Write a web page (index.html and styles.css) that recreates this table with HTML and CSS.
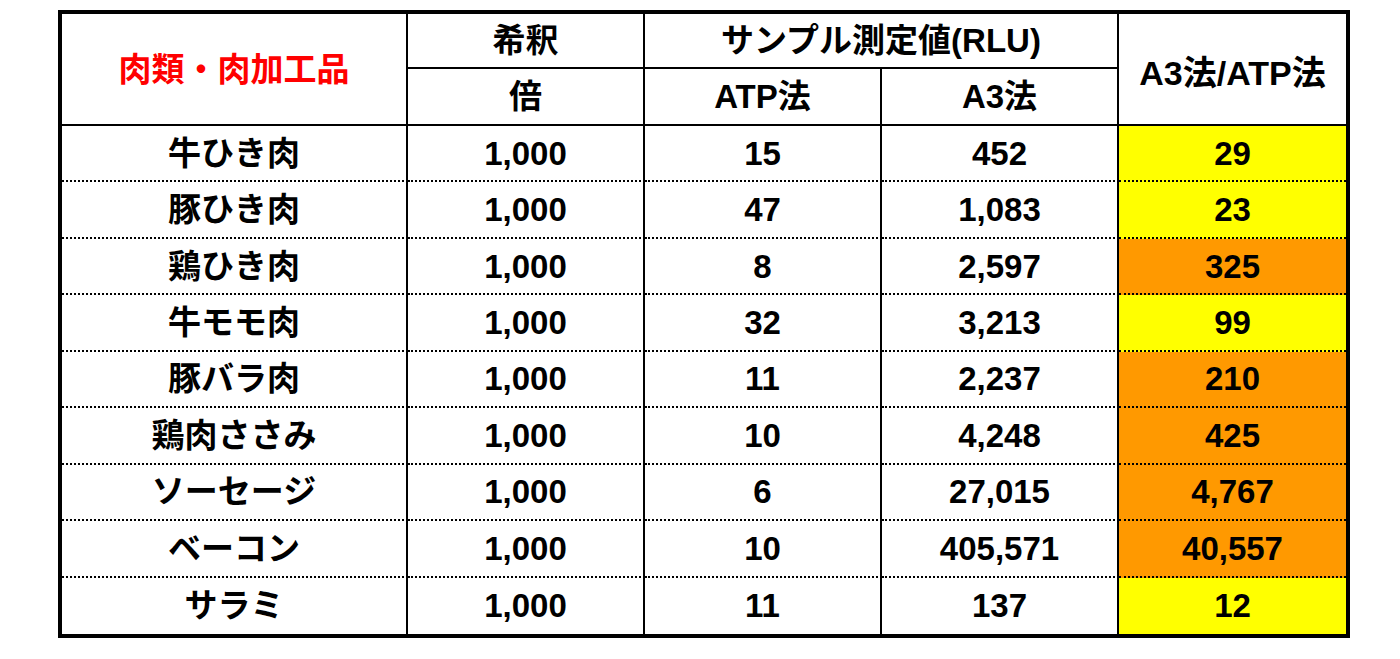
FILE: index.html
```html
<!DOCTYPE html>
<html lang="ja">
<head>
<meta charset="utf-8">
<title>肉類・肉加工品</title>
<link rel="stylesheet" href="styles.css">
</head>
<body>
<div class="sheet">
  <div class="cell head span-rows title">肉類・肉加工品</div>
  <div class="cell head">希釈</div>
  <div class="cell head span-cols">サンプル測定値(RLU)</div>
  <div class="cell head span-rows last ratio">A3法/ATP法</div>
  <div class="cell head">倍</div>
  <div class="cell head">ATP法</div>
  <div class="cell head">A3法</div>

  <div class="cell">牛ひき肉</div><div class="cell">1,000</div><div class="cell">15</div><div class="cell">452</div><div class="cell last yellow">29</div>
  <div class="cell">豚ひき肉</div><div class="cell">1,000</div><div class="cell">47</div><div class="cell">1,083</div><div class="cell last yellow">23</div>
  <div class="cell">鶏ひき肉</div><div class="cell">1,000</div><div class="cell">8</div><div class="cell">2,597</div><div class="cell last orange">325</div>
  <div class="cell">牛モモ肉</div><div class="cell">1,000</div><div class="cell">32</div><div class="cell">3,213</div><div class="cell last yellow">99</div>
  <div class="cell">豚バラ肉</div><div class="cell">1,000</div><div class="cell">11</div><div class="cell">2,237</div><div class="cell last orange">210</div>
  <div class="cell">鶏肉ささみ</div><div class="cell">1,000</div><div class="cell">10</div><div class="cell">4,248</div><div class="cell last orange">425</div>
  <div class="cell">ソーセージ</div><div class="cell">1,000</div><div class="cell">6</div><div class="cell">27,015</div><div class="cell last orange">4,767</div>
  <div class="cell">ベーコン</div><div class="cell">1,000</div><div class="cell">10</div><div class="cell">405,571</div><div class="cell last orange">40,557</div>
  <div class="cell bottom">サラミ</div><div class="cell bottom">1,000</div><div class="cell bottom">11</div><div class="cell bottom">137</div><div class="cell bottom last yellow">12</div>
</div>
</body>
</html>
```
FILE: styles.css
```css
html, body {
  margin: 0;
  padding: 0;
  background: #ffffff;
}

body {
  font-family: "Liberation Sans", Arial, "Noto Sans CJK JP", sans-serif;
  font-weight: bold;
  color: #000000;
}

.sheet {
  display: grid;
  grid-template-columns: 346px 237px 237px 237px 227px;
  grid-template-rows: 55px 57px repeat(9, 56.45px);
  width: 1284px;
  margin: 10px 0 0 58px;
  border: 4px solid #000000;
}

.cell {
  box-sizing: border-box;
  display: flex;
  align-items: center;
  justify-content: center;
  font-size: 33px;
  line-height: 1;
  border-right: 2px solid #000000;
  border-bottom: 2px dotted #000000;
  white-space: nowrap;
}

.cell.head {
  border-bottom: 2px solid #000000;
}

.cell.last {
  border-right: none;
}

.cell.bottom {
  border-bottom: none;
}

.span-rows {
  grid-row: span 2;
}

.span-cols {
  grid-column: span 2;
}

.title {
  color: #ff0000;
}

.ratio {
  padding-top: 8px;
  font-size: 34px;
}

.yellow {
  background: #ffff00;
}

.orange {
  background: #ff9900;
}
```
